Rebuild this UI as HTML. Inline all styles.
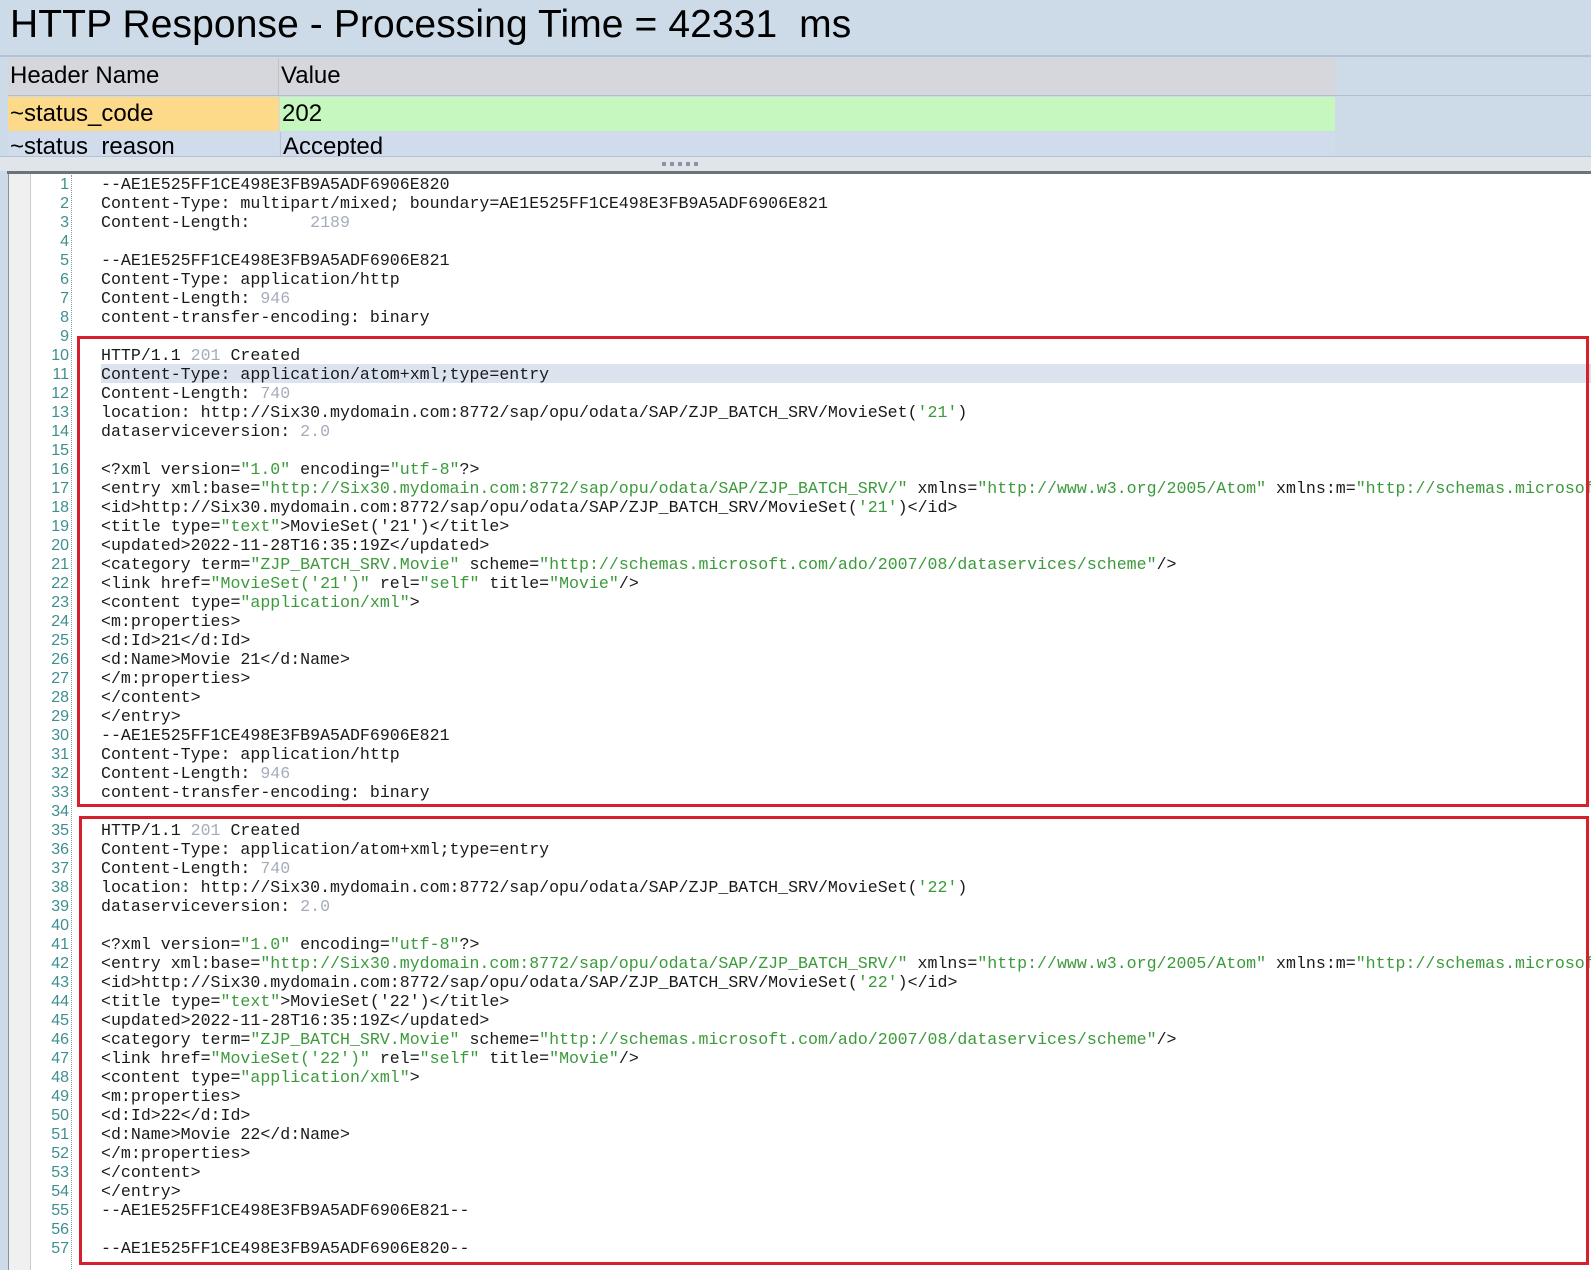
<!DOCTYPE html>
<html><head><meta charset="utf-8"><style>
*{margin:0;padding:0;box-sizing:border-box}
body{width:1591px;height:1270px;overflow:hidden;background:#cddbe9;font-family:"Liberation Sans",sans-serif;position:relative}
.t{position:absolute;left:10px;top:3px;font-size:39px;color:#000;letter-spacing:0.1px}
.cell{position:absolute;font-size:24px;padding-left:2px;line-height:36px;color:#000}
.code{position:absolute;left:0;top:174px;width:1591px;height:1096px;background:#fff;overflow:hidden}
.g1{position:absolute;left:0;top:0;width:8px;height:100%;background:#cddbe9}
.g2{position:absolute;left:8px;top:0;width:23px;height:100%;background:#f0f0f0;border-left:1px solid #8a939c;border-right:1px solid #c8ccd0}
.nums{position:absolute;left:31px;top:1px;width:41px;border-right:1px dotted #6aa6a6;height:100%;text-align:right;padding-right:2px;color:#3f8f8f;font-family:"Liberation Sans",sans-serif;font-size:16px;line-height:19px}
pre{position:absolute;left:101px;top:1px;font-family:"Liberation Mono",monospace;font-size:16.6px;line-height:19px;color:#1a1a1a;white-space:pre}
.n{color:#a4acbb}.s{color:#3c9a3c}
.hl{position:absolute;left:101px;top:190px;width:1490px;height:19px;background:#dbe4ee}
.box{position:absolute;border:3px solid #d5212e}
</style></head><body>
<div class="t">HTTP Response - Processing Time = 42331&nbsp; ms</div>
<div style="position:absolute;left:0;top:55px;width:1591px;height:2px;background:#b3c3d3"></div>
<div class="cell" style="left:8px;top:58px;width:271px;height:37px;background:#d5d7dc;border-right:1px solid #bfc3c8">Header Name</div>
<div class="cell" style="left:279px;top:58px;width:1057px;height:37px;background:#d5d7dc">Value</div>
<div style="position:absolute;left:8px;top:95px;width:1583px;height:1px;background:#b0bfcf"></div>
<div class="cell" style="left:8px;top:97px;width:271px;height:34px;background:#fdd98a;line-height:34px">~status_code</div>
<div class="cell" style="left:280px;top:97px;width:1055px;height:34px;background:#c5f7bf;line-height:34px">202</div>
<div class="cell" style="left:8px;top:132px;width:271px;height:25px;overflow:hidden;background:#d0dcec;line-height:30px;padding-top:0">~status_reason</div>
<div class="cell" style="left:280px;top:132px;width:1055px;height:25px;overflow:hidden;background:#d0dcec;line-height:30px;border-left:1px solid #b8c4d0">Accepted</div>
<div style="position:absolute;left:0;top:156px;width:1591px;height:15px;background:#dfe5ea;border-top:1px solid #b8c2cc"></div>
<div style="position:absolute;left:662px;top:162px;width:37px;height:4px;background:repeating-linear-gradient(90deg,#8d969e 0 4px,transparent 4px 8px)"></div>
<div style="position:absolute;left:7px;top:171px;width:1584px;height:3px;background:#6b737b"></div>
<div class="code">
<div class="g1"></div><div class="g2"></div>
<div class="hl"></div>
<div class="nums">1<br>2<br>3<br>4<br>5<br>6<br>7<br>8<br>9<br>10<br>11<br>12<br>13<br>14<br>15<br>16<br>17<br>18<br>19<br>20<br>21<br>22<br>23<br>24<br>25<br>26<br>27<br>28<br>29<br>30<br>31<br>32<br>33<br>34<br>35<br>36<br>37<br>38<br>39<br>40<br>41<br>42<br>43<br>44<br>45<br>46<br>47<br>48<br>49<br>50<br>51<br>52<br>53<br>54<br>55<br>56<br>57</div>
<pre>--AE1E525FF1CE498E3FB9A5ADF6906E820
Content-Type: multipart/mixed; boundary=AE1E525FF1CE498E3FB9A5ADF6906E821
Content-Length:      <span class="n">2189</span>

--AE1E525FF1CE498E3FB9A5ADF6906E821
Content-Type: application/http
Content-Length: <span class="n">946</span>
content-transfer-encoding: binary

HTTP/1.1 <span class="n">201</span> Created
Content-Type: application/atom+xml;type=entry
Content-Length: <span class="n">740</span>
location: http://Six30.mydomain.com:8772/sap/opu/odata/SAP/ZJP_BATCH_SRV/MovieSet(<span class="s">'21'</span>)
dataserviceversion: <span class="n">2.0</span>

&lt;?xml version=<span class="s">"1.0"</span> encoding=<span class="s">"utf-8"</span>?&gt;
&lt;entry xml:base=<span class="s">"http://Six30.mydomain.com:8772/sap/opu/odata/SAP/ZJP_BATCH_SRV/"</span> xmlns=<span class="s">"http://www.w3.org/2005/Atom"</span> xmlns:m=<span class="s">"http://schemas.microsoft.com/ado/2007/08/dataservices/metadata"</span>
&lt;id&gt;http://Six30.mydomain.com:8772/sap/opu/odata/SAP/ZJP_BATCH_SRV/MovieSet(<span class="s">'21'</span>)&lt;/id&gt;
&lt;title type=<span class="s">"text"</span>&gt;MovieSet('21')&lt;/title&gt;
&lt;updated&gt;2022-11-28T16:35:19Z&lt;/updated&gt;
&lt;category term=<span class="s">"ZJP_BATCH_SRV.Movie"</span> scheme=<span class="s">"http://schemas.microsoft.com/ado/2007/08/dataservices/scheme"</span>/&gt;
&lt;link href=<span class="s">"MovieSet('21')"</span> rel=<span class="s">"self"</span> title=<span class="s">"Movie"</span>/&gt;
&lt;content type=<span class="s">"application/xml"</span>&gt;
&lt;m:properties&gt;
&lt;d:Id&gt;21&lt;/d:Id&gt;
&lt;d:Name&gt;Movie 21&lt;/d:Name&gt;
&lt;/m:properties&gt;
&lt;/content&gt;
&lt;/entry&gt;
--AE1E525FF1CE498E3FB9A5ADF6906E821
Content-Type: application/http
Content-Length: <span class="n">946</span>
content-transfer-encoding: binary

HTTP/1.1 <span class="n">201</span> Created
Content-Type: application/atom+xml;type=entry
Content-Length: <span class="n">740</span>
location: http://Six30.mydomain.com:8772/sap/opu/odata/SAP/ZJP_BATCH_SRV/MovieSet(<span class="s">'22'</span>)
dataserviceversion: <span class="n">2.0</span>

&lt;?xml version=<span class="s">"1.0"</span> encoding=<span class="s">"utf-8"</span>?&gt;
&lt;entry xml:base=<span class="s">"http://Six30.mydomain.com:8772/sap/opu/odata/SAP/ZJP_BATCH_SRV/"</span> xmlns=<span class="s">"http://www.w3.org/2005/Atom"</span> xmlns:m=<span class="s">"http://schemas.microsoft.com/ado/2007/08/dataservices/metadata"</span>
&lt;id&gt;http://Six30.mydomain.com:8772/sap/opu/odata/SAP/ZJP_BATCH_SRV/MovieSet(<span class="s">'22'</span>)&lt;/id&gt;
&lt;title type=<span class="s">"text"</span>&gt;MovieSet('22')&lt;/title&gt;
&lt;updated&gt;2022-11-28T16:35:19Z&lt;/updated&gt;
&lt;category term=<span class="s">"ZJP_BATCH_SRV.Movie"</span> scheme=<span class="s">"http://schemas.microsoft.com/ado/2007/08/dataservices/scheme"</span>/&gt;
&lt;link href=<span class="s">"MovieSet('22')"</span> rel=<span class="s">"self"</span> title=<span class="s">"Movie"</span>/&gt;
&lt;content type=<span class="s">"application/xml"</span>&gt;
&lt;m:properties&gt;
&lt;d:Id&gt;22&lt;/d:Id&gt;
&lt;d:Name&gt;Movie 22&lt;/d:Name&gt;
&lt;/m:properties&gt;
&lt;/content&gt;
&lt;/entry&gt;
--AE1E525FF1CE498E3FB9A5ADF6906E821--

--AE1E525FF1CE498E3FB9A5ADF6906E820--</pre>
</div>
<div class="box" style="left:77px;top:336px;width:1512px;height:471px"></div>
<div class="box" style="left:79px;top:816px;width:1510px;height:449px"></div>
</body></html>
